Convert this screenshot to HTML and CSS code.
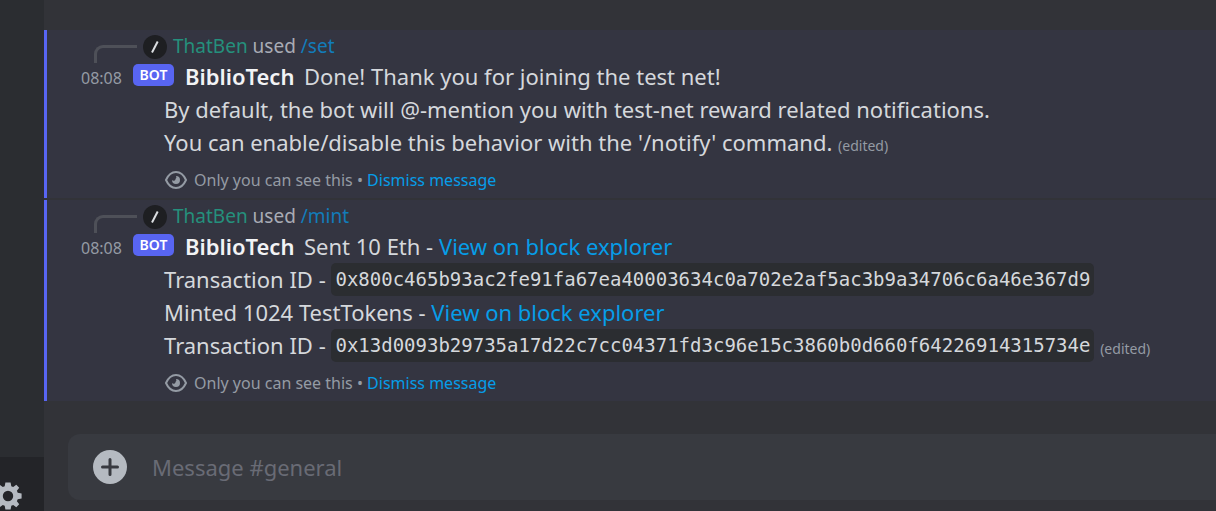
FILE: index.html
```html
<!DOCTYPE html>
<html lang="en">
<head>
<meta charset="utf-8">
<title>#general</title>
<link rel="stylesheet" href="styles.css">
</head>
<body>
<div class="app">
  <aside class="sidebar">
    <div class="user-panel">
      <button class="settings" aria-label="User settings">
        <svg width="28" height="28" viewBox="-14 -14 28 28" fill="#b5bac1">
          <path fill-rule="evenodd" d="M-2.6-13.6H2.6L3.3-9.7 5.2-8.9 8.3-11.2 11.2-8.3 8.9-5.2 9.7-3.3 13.6-2.6V2.6L9.7 3.3 8.9 5.2 11.2 8.3 8.3 11.2 5.2 8.9 3.3 9.7 2.6 13.6H-2.6L-3.3 9.7-5.2 8.9-8.3 11.2-11.2 8.3-8.9 5.2-9.7 3.3-13.6 2.6V-2.6L-9.7-3.3-8.9-5.2-11.2-8.3-8.3-11.2-5.2-8.9-3.3-9.7ZM0-5.2A5.2 5.2 0 1 0 0 5.2 5.2 5.2 0 1 0 0-5.2Z"/>
        </svg>
      </button>
    </div>
  </aside>
  <main class="chat">
    <div class="messages">
      <article class="message">
        <div class="reply">
          <span class="spine"></span>
          <svg width="24" height="24" viewBox="0 0 24 24"><circle cx="12" cy="12" r="12" fill="#1e1f22"/><path d="M9 17.5 14.7 6.5" stroke="#dbdee1" stroke-width="2"/></svg>
          <span><a class="user" href="#">ThatBen</a> used <a class="command" href="#">/set</a></span>
        </div>
        <div class="head">
          <time class="time">08:08</time>
          <span class="bot">BOT</span>
          <strong class="name">BiblioTech</strong>
          <span>Done! Thank you for joining the test net!</span>
        </div>
        <p class="line">By default, the bot will @-mention you with test-net reward related notifications.</p>
        <p class="line">You can enable/disable this behavior with the '/notify' command. <small class="edited">(edited)</small></p>
        <div class="notice">
          <svg width="24" height="24" viewBox="0 0 24 24"><path d="M2 12C4 7.5 7.5 4 12 4s8 3.5 10 8c-2 4.500-5.500 8-10 8S4 16.500 2 12Z" fill="none" stroke="#949ba4" stroke-width="2"/><path d="M12 8A4 4 0 1 1 8 12 2 2 0 0 0 11.600 10.800 2 2 0 0 0 12 8Z" fill="#949ba4"/></svg>
          <span>Only you can see this • <a class="link" href="#">Dismiss message</a></span>
        </div>
      </article>
      <article class="message">
        <div class="reply">
          <span class="spine"></span>
          <svg width="24" height="24" viewBox="0 0 24 24"><circle cx="12" cy="12" r="12" fill="#1e1f22"/><path d="M9 17.5 14.7 6.5" stroke="#dbdee1" stroke-width="2"/></svg>
          <span><a class="user" href="#">ThatBen</a> used <a class="command" href="#">/mint</a></span>
        </div>
        <div class="head">
          <time class="time">08:08</time>
          <span class="bot">BOT</span>
          <strong class="name">BiblioTech</strong>
          <span>Sent 10 Eth - <a class="link" href="#">View on block explorer</a></span>
        </div>
        <p class="line">Transaction ID - <code class="code">0x800c465b93ac2fe91fa67ea40003634c0a702e2af5ac3b9a34706c6a46e367d9</code></p>
        <p class="line">Minted 1024 TestTokens - <a class="link" href="#">View on block explorer</a></p>
        <p class="line">Transaction ID - <code class="code">0x13d0093b29735a17d22c7cc04371fd3c96e15c3860b0d660f64226914315734e</code> <small class="edited">(edited)</small></p>
        <div class="notice">
          <svg width="24" height="24" viewBox="0 0 24 24"><path d="M2 12C4 7.5 7.5 4 12 4s8 3.5 10 8c-2 4.500-5.500 8-10 8S4 16.500 2 12Z" fill="none" stroke="#949ba4" stroke-width="2"/><path d="M12 8A4 4 0 1 1 8 12 2 2 0 0 0 11.600 10.800 2 2 0 0 0 12 8Z" fill="#949ba4"/></svg>
          <span>Only you can see this • <a class="link" href="#">Dismiss message</a></span>
        </div>
      </article>
    </div>
    <form class="composer">
      <button class="attach" type="button" aria-label="Add attachment">
        <svg width="34" height="34" viewBox="0 0 34 34"><circle cx="17" cy="17" r="17" fill="#b5bac1"/><path d="M17 9.5V24.5M9.5 17H24.5" stroke="#383a40" stroke-width="3" stroke-linecap="round"/></svg>
      </button>
      <input class="entry" type="text" placeholder="Message #general" aria-label="Message #general">
    </form>
  </main>
</div>
</body>
</html>
```
FILE: styles.css
```css
* { box-sizing: border-box; }
body {
  margin: 0;
  background: #323338;
  color: #d5d8dc;
  font-family: "Noto Sans", sans-serif;
  font-size: 22px;
  line-height: 33px;
}
button { border: 0; padding: 0; background: none; display: flex; cursor: pointer; }
a { text-decoration: none; }
p { margin: 0; }
.app { display: flex; height: 100vh; overflow: hidden; }
.sidebar {
  flex: 0 0 44px;
  display: flex;
  flex-direction: column;
  justify-content: flex-end;
  background: #2b2d31;
  overflow: hidden;
}
.user-panel { height: 54px; padding-top: 25px; background: #232428; }
.settings { margin-left: -6px; }
.chat {
  flex: 1;
  min-width: 0;
  display: flex;
  flex-direction: column;
  justify-content: flex-end;
}
.messages { display: flex; flex-direction: column; gap: 2px; }
.message {
  border-left: 3px solid #5865f2;
  background: #343541;
  padding-bottom: 3px;
  white-space: nowrap;
}
.reply {
  display: flex;
  align-items: center;
  gap: 6px;
  height: 30px;
  padding: 3px 0 0 47px;
  font-size: 19px;
  color: #a9acb5;
}
.spine {
  align-self: flex-end;
  width: 43px;
  height: 18px;
  border: 3px solid #4e5058;
  border-width: 3px 0 0 3px;
  border-top-left-radius: 9px;
  margin-bottom: -3px;
}
.user { color: #25907c; }
.command { color: #127cba; }
.head { display: flex; align-items: flex-start; padding-left: 34px; }
.time { flex: 0 0 52px; padding-top: 3px; font-size: 16px; line-height: 30px; color: #949ba4; }
.bot {
  flex: 0 0 41px;
  height: 22px;
  margin: 4px 11px 0 0;
  border-radius: 5px;
  background: #5865f2;
  color: #fff;
  font-size: 14px;
  font-weight: 600;
  line-height: 22px;
  text-align: center;
}
.name { flex: 0 0 119px; font-weight: 600; color: #f2f3f5; }
.line { padding-left: 117px; }
.edited { font-size: 14px; line-height: 16px; color: #949ba4; }
.link { color: #069de8; }
.code {
  display: inline-block;
  padding: 0 4px;
  border-radius: 5px;
  background: #2b2d31;
  font-family: "DejaVu Sans Mono", monospace;
  font-size: 19px;
  vertical-align: top;
}
.notice {
  display: flex;
  align-items: center;
  gap: 6px;
  height: 30px;
  margin-top: 6px;
  padding-left: 117px;
  font-size: 16px;
  color: #949ba4;
}
.composer {
  display: flex;
  align-items: center;
  gap: 25px;
  height: 66px;
  margin: 33px 0 11px 24px;
  padding-left: 25px;
  border-radius: 12px 0 0 12px;
  background: #383a40;
}
.entry {
  flex: 1;
  min-width: 0;
  border: 0;
  padding: 0;
  outline: 0;
  background: none;
  color: #dbdee1;
  font: inherit;
}
.entry::placeholder { color: #696b75; opacity: 1; }
```
